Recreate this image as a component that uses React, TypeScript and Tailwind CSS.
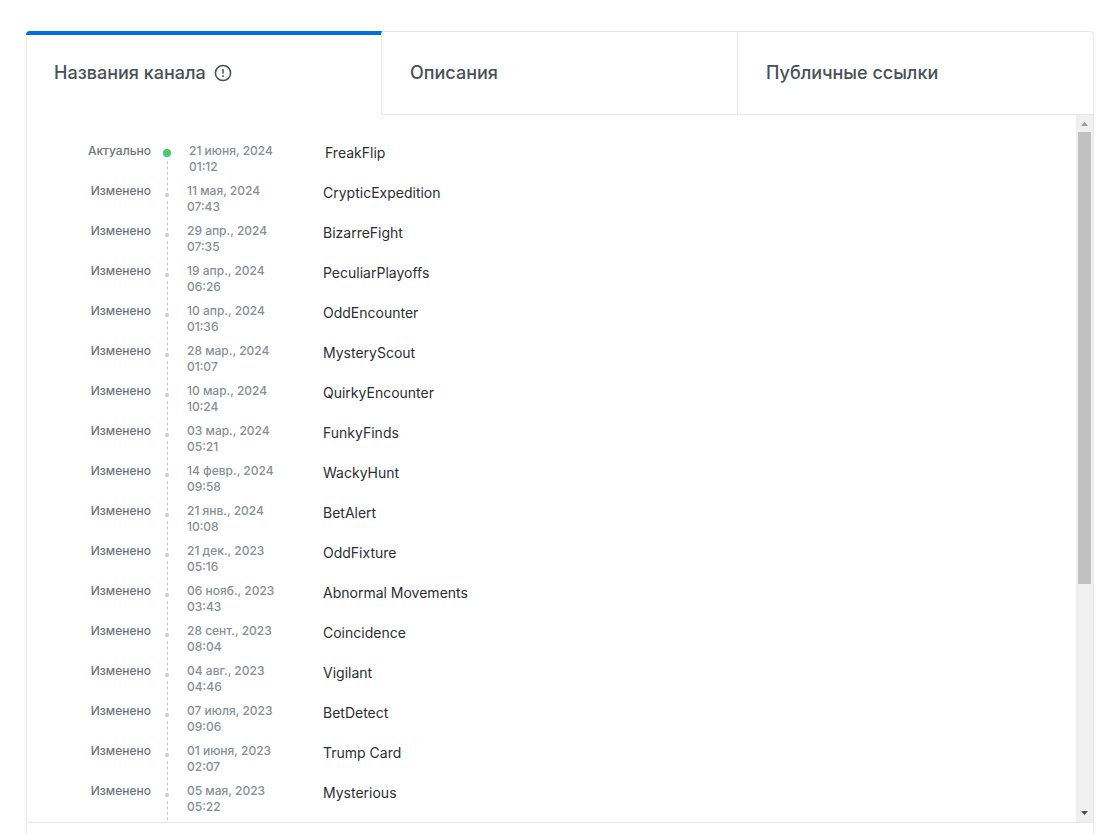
import { useState } from "react";

type Entry = { date: string; time: string; name: string };

const entries: Entry[] = [
  { date: "21 июня, 2024", time: "01:12", name: "FreakFlip" },
  { date: "11 мая, 2024", time: "07:43", name: "CrypticExpedition" },
  { date: "29 апр., 2024", time: "07:35", name: "BizarreFight" },
  { date: "19 апр., 2024", time: "06:26", name: "PeculiarPlayoffs" },
  { date: "10 апр., 2024", time: "01:36", name: "OddEncounter" },
  { date: "28 мар., 2024", time: "01:07", name: "MysteryScout" },
  { date: "10 мар., 2024", time: "10:24", name: "QuirkyEncounter" },
  { date: "03 мар., 2024", time: "05:21", name: "FunkyFinds" },
  { date: "14 февр., 2024", time: "09:58", name: "WackyHunt" },
  { date: "21 янв., 2024", time: "10:08", name: "BetAlert" },
  { date: "21 дек., 2023", time: "05:16", name: "OddFixture" },
  { date: "06 нояб., 2023", time: "03:43", name: "Abnormal Movements" },
  { date: "28 сент., 2023", time: "08:04", name: "Coincidence" },
  { date: "04 авг., 2023", time: "04:46", name: "Vigilant" },
  { date: "07 июля, 2023", time: "09:06", name: "BetDetect" },
  { date: "01 июня, 2023", time: "02:07", name: "Trump Card" },
  { date: "05 мая, 2023", time: "05:22", name: "Mysterious" },
];

const tabs = ["Названия канала", "Описания", "Публичные ссылки"];

function InfoIcon() {
  return (
    <svg width="18" height="18" viewBox="0 0 18 18" fill="none" aria-hidden="true">
      <circle cx="9" cy="9" r="7.6" stroke="currentColor" strokeWidth="1.5" />
      <path d="M9 5v4.700" stroke="currentColor" strokeWidth="1.5" />
      <path d="M9 11.300v1.600" stroke="currentColor" strokeWidth="1.6" />
    </svg>
  );
}

function Row({ entry, current }: { entry: Entry; current: boolean }) {
  return (
    <li className="flex h-10">
      <span className="-mt-0.5 w-[124px] shrink-0 text-right text-[12px] leading-4 font-medium text-[#6c757d]">
        {current ? "Актуально" : "Изменено"}
      </span>
      <span className={`flex w-9 shrink-0 flex-col items-start pl-3 ${current ? "pt-1" : "pt-2"}`}>
        <span
          className={
            current
              ? "size-2 shrink-0 rounded-full bg-[#45cb72]"
              : "ml-0.5 size-1 shrink-0 rounded-full bg-[#c8ccd1]"
          }
        />
        <span className="mt-1 -mb-1.5 ml-1 flex-1 border-l border-dashed border-[#c5c9ce]" />
      </span>
      <time
        className={`-mt-0.5 w-[136px] shrink-0 text-[12px] leading-4 font-medium text-[#868e96] ${current ? "ml-0.5" : ""}`}
      >
        {entry.date}
        <br />
        {entry.time}
      </time>
      <span className="text-[14px] leading-4 text-[#2a2e33]">{entry.name}</span>
    </li>
  );
}

export default function App() {
  const [active, setActive] = useState(0);
  return (
    <main className="min-h-screen bg-white pt-[31px] pr-[18px] pl-[26px] font-['Inter',sans-serif]">
      <section className="rounded-t border-x border-[#e6e8ec]">
        <div role="tablist" className="-mx-px grid grid-cols-3">
          {tabs.map((tab, i) => (
            <button
              key={tab}
              type="button"
              role="tab"
              aria-selected={active === i}
              onClick={() => setActive(i)}
              className={`flex h-[84px] items-center gap-2 border-r px-7 text-left text-[18px] leading-6 font-medium text-[#495057] ${
                active === i
                  ? "rounded-tl-sm border-t-4 border-r-[#e6e8ec] border-t-[#006fe0] pb-1"
                  : "border-t border-b border-[#e6e8ec] last:rounded-tr-sm"
              }`}
            >
              {tab}
              {i === 0 && <InfoIcon />}
            </button>
          ))}
        </div>
        <div role="tabpanel" className="flex h-[708px] border-b border-[#e6e8ec]">
          <ul className="flex-1 overflow-y-auto pt-[30px] [scrollbar-width:none]">
            {entries.map((entry, i) => (
              <Row key={entry.name} entry={entry} current={i === 0} />
            ))}
          </ul>
          <div className="flex w-[17px] flex-col items-center bg-[#f0f0f0]">
            <svg className="size-[17px] shrink-0" viewBox="0 0 17 17" fill="#9a9ea3" aria-hidden="true">
              <path d="M5 11h7L8.500 7z" />
            </svg>
            <div className="h-[452px] w-[13px] bg-[#c1c1c1]" />
            <div className="flex-1" />
            <svg className="size-[17px] shrink-0" viewBox="0 0 17 17" fill="#4d4f52" aria-hidden="true">
              <path d="M5 6h7L8.500 10z" />
            </svg>
          </div>
        </div>
        <div className="h-[11px]" />
      </section>
    </main>
  );
}
